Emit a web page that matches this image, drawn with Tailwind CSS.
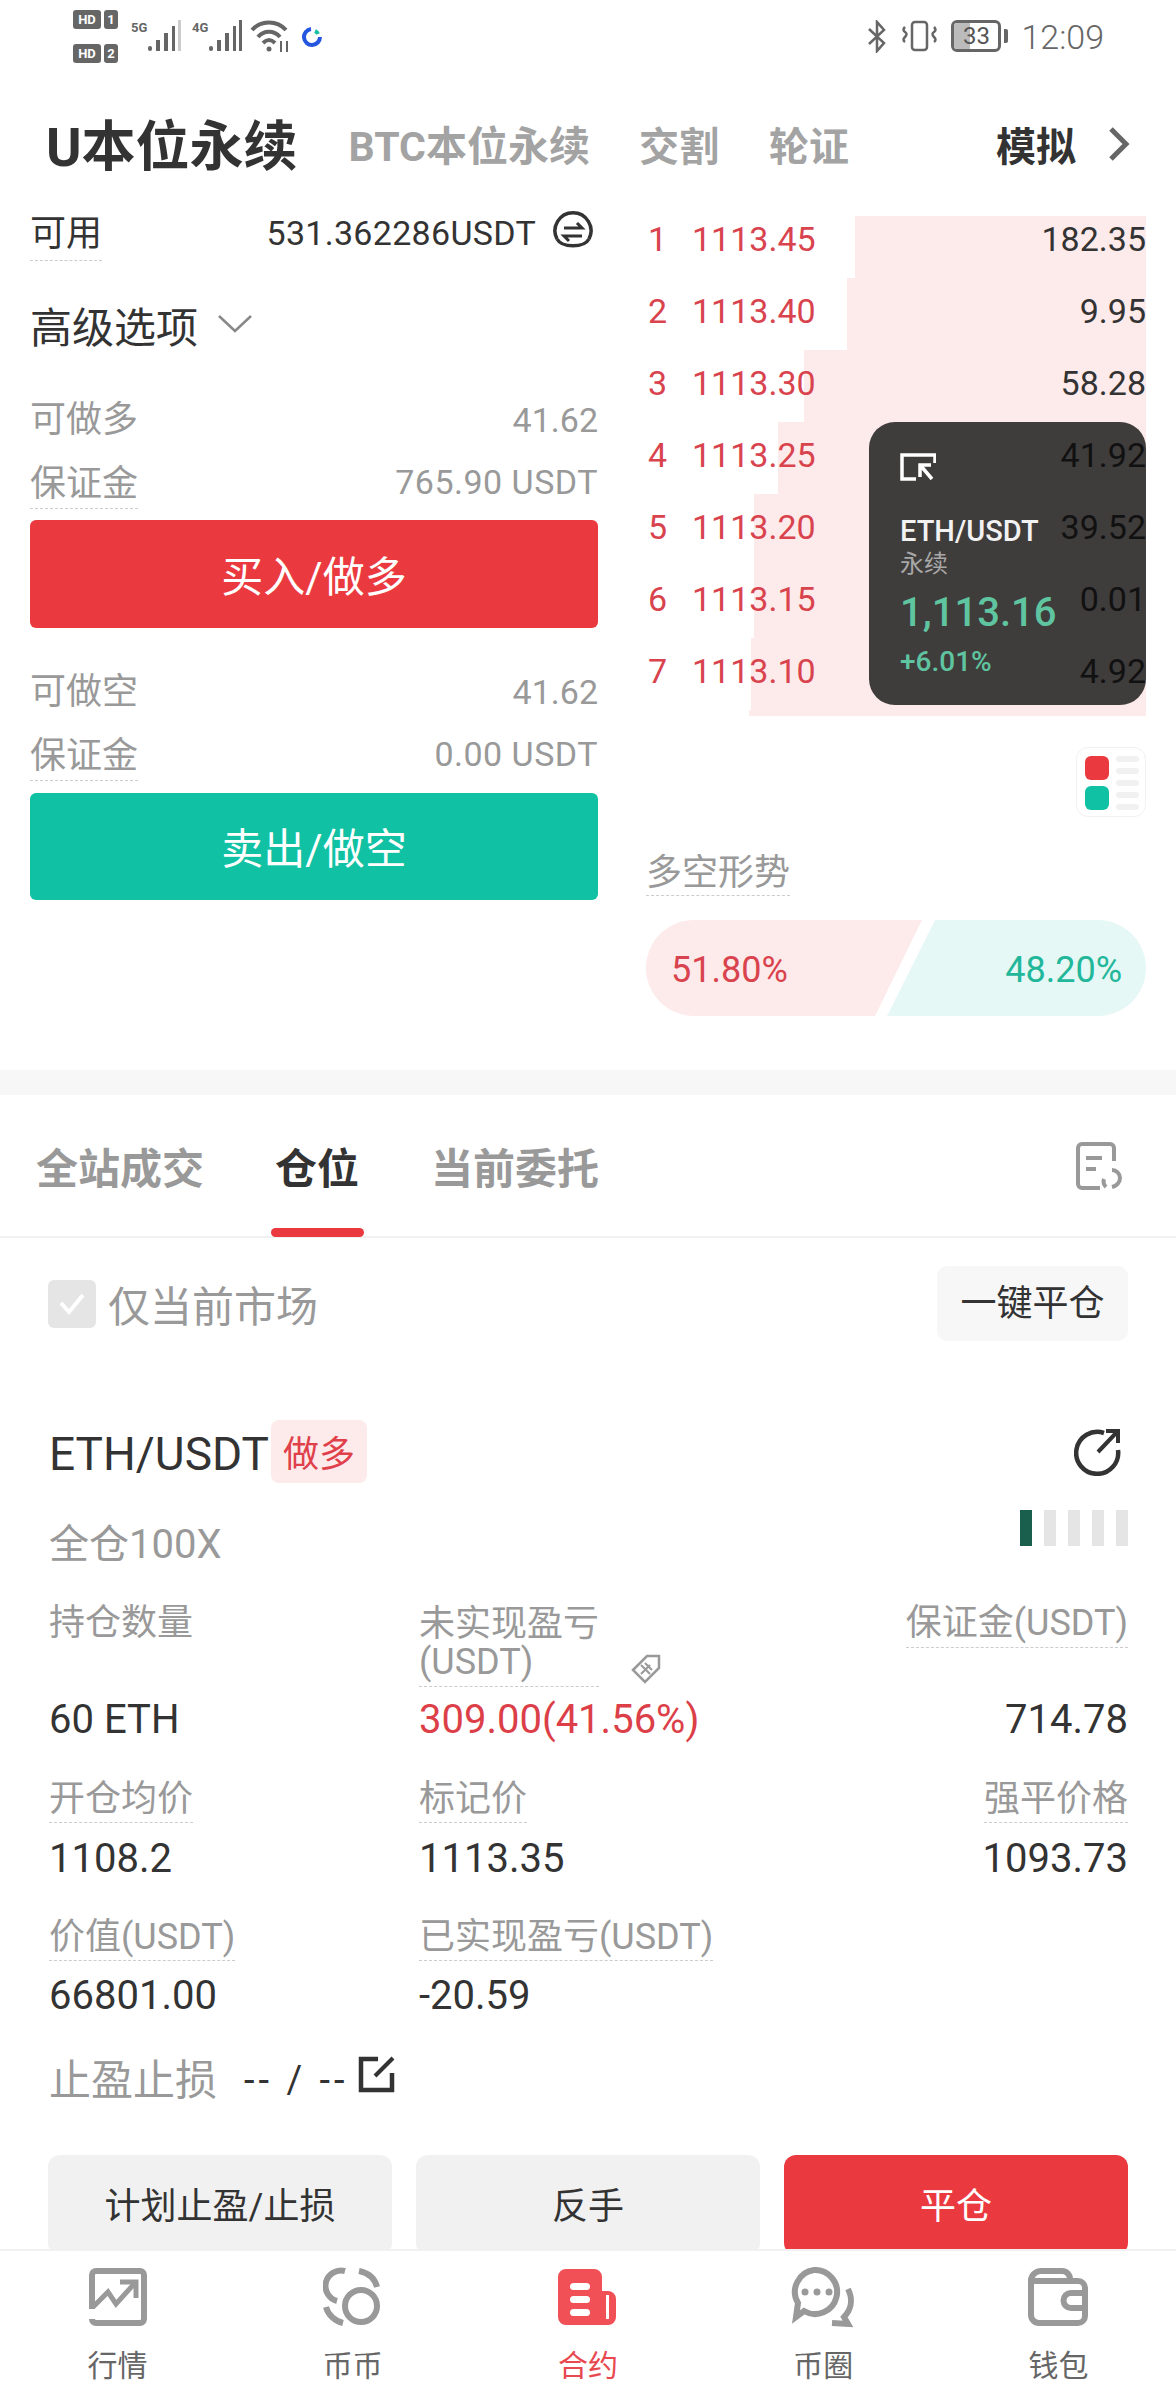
<!DOCTYPE html>
<html lang="zh">
<head>
<meta charset="utf-8">
<script src="https://cdn.jsdelivr.net/npm/@tailwindcss/browser@4"></script>
</head>
<body class="bg-white">
<div class="w-[1176px] h-[2400px] overflow-hidden bg-white text-[#333] font-['Roboto','Noto_Sans_CJK_SC',sans-serif]">
  <div class="h-[2249px] overflow-hidden">

    <!-- status bar -->
    <div class="h-[74px] mb-[18px] flex justify-between pl-[73px] pr-[72px]">
      <div class="flex">
        <div class="w-[46px] pt-[10px] flex flex-col gap-[15px]">
          <div class="flex gap-[3px] h-[19px]"><span class="w-[28px] bg-[#666] rounded-[3px] text-white text-[13px] leading-[19px] font-bold text-center">HD</span><span class="w-[14px] bg-[#666] rounded-[3px] text-white text-[13px] leading-[19px] font-bold text-center">1</span></div>
          <div class="flex gap-[3px] h-[19px]"><span class="w-[28px] bg-[#666] rounded-[3px] text-white text-[13px] leading-[19px] font-bold text-center">HD</span><span class="w-[14px] bg-[#666] rounded-[3px] text-white text-[13px] leading-[19px] font-bold text-center">2</span></div>
        </div>
        <div class="ml-[12px] mt-[20px] w-[17px] text-[13px] leading-[15px] font-bold text-[#666]">5G</div>
        <svg class="mt-[20px]" width="33" height="32" viewBox="0 0 33 32" fill="#666"><rect x="0" y="26" width="4" height="5" rx="2"/><rect x="8" y="20" width="4" height="11"/><rect x="16" y="13" width="4" height="18"/><rect x="24" y="6" width="3" height="25"/><rect x="30" y="0" width="3" height="31" fill="#ccc"/></svg>
        <div class="ml-[11px] mt-[20px] w-[17px] text-[13px] leading-[15px] font-bold text-[#666]">4G</div>
        <svg class="mt-[20px]" width="33" height="32" viewBox="0 0 33 32" fill="#666"><rect x="0" y="26" width="4" height="5" rx="2"/><rect x="8" y="20" width="4" height="11"/><rect x="16" y="13" width="4" height="18"/><rect x="24" y="6" width="3" height="25"/><rect x="30" y="0" width="3" height="31"/></svg>
        <svg class="ml-[8px] mt-[19px]" width="40" height="34" viewBox="0 0 40 34" fill="none" stroke="#666" stroke-width="4"><path d="M2 11C11 1 27 1 36 11"/><path d="M8 18C14 11 24 11 30 18"/><path d="M13 24C17 20 21 20 25 24"/><circle cx="19" cy="30" r="2.5" fill="#666" stroke="none"/><path d="M31 22v11M37 22v11" stroke-width="2"/></svg>
        <svg class="ml-[12px] mt-[27px]" width="20" height="20" viewBox="0 0 20 20" fill="none" stroke-width="4"><path d="M9 2A8 8 0 1 0 18 10" stroke="#2456e0"/><path d="M13 4a6 6 0 0 1 3 3" stroke="#14c2a3"/></svg>
      </div>
      <div class="flex items-start">
        <svg class="mt-[20px]" width="20" height="33" viewBox="0 0 20 33" fill="none" stroke="#666" stroke-width="2.5"><path d="M2 9L17 23L10 31V2L17 10L2 24"/></svg>
        <svg class="ml-[14px] mt-[20px]" width="37" height="32" viewBox="0 0 37 32" fill="none" stroke="#666" stroke-width="2.5"><rect x="11" y="2" width="15" height="28" rx="3"/><path d="M4 7q-3 3 0 5t0 5t0 5M33 7q3 3 0 5t0 5t0 5"/></svg>
        <div class="ml-[13px] mt-[20px] w-[50px] h-[32px] border-[3px] border-[#666] rounded-[6px] relative overflow-hidden text-center text-[24px] leading-[26px] text-[#555]"><div class="absolute left-0 top-0 bottom-0 w-[16px] bg-[#bbb]"></div><span class="relative">33</span></div>
        <div class="ml-[3px] mt-[29px] w-[4px] h-[14px] bg-[#666] rounded-r-[2px]"></div>
        <div class="ml-[13px] text-[34px] leading-[74px] font-light text-[#666]">12:09</div>
      </div>
    </div>

    <!-- contract type tabs -->
    <div class="h-[110px] flex items-center pl-[46px] pr-[46px] font-bold">
      <span class="text-[54px] text-[#333]">U本位永续</span>
      <span class="ml-[51px] mt-[2px] text-[41px] text-[#a3a3a3]">BTC本位永续</span>
      <span class="ml-[49px] mt-[2px] text-[40px] text-[#a3a3a3]">交割</span>
      <span class="ml-[50px] mt-[2px] text-[40px] text-[#a3a3a3]">轮证</span>
      <span class="ml-auto mt-[2px] text-[40px] text-[#333]">模拟</span>
      <svg class="ml-[32px] mb-[6px]" width="22" height="34" viewBox="0 0 22 34" fill="none" stroke="#666" stroke-width="5"><path d="M3 2L18 17L3 32"/></svg>
    </div>

    <!-- trade panel + order book -->
    <div class="h-[868px] flex pl-[30px]">
      <div class="w-[568px]">
        <div class="mt-[12px] flex justify-between items-start">
          <span class="text-[36px] leading-[40px] pb-[6px] border-b border-dashed border-[#ccc]">可用</span>
          <span class="flex items-center mt-[-3px] mr-[4px] text-[34px] leading-[40px] tracking-[0.3px]">531.362286USDT
            <svg class="ml-[16px] mb-[2px]" width="42" height="42" viewBox="0 0 42 42" fill="none" stroke="#333" stroke-width="3.5"><path d="M5 28A18 18 0 1 1 37 28"/><path d="M5 28C10 37 32 37 37 28" /><path d="M12 17H30L25 12M30 25H12L17 30" stroke-width="3"/></svg>
          </span>
        </div>
        <div class="mt-[44px] flex items-center text-[42px] leading-[48px]">高级选项
          <svg class="ml-[20px] mb-[10px]" width="34" height="20" viewBox="0 0 34 20" fill="none" stroke="#888" stroke-width="2.5"><path d="M1 2L17 17L33 2"/></svg>
        </div>
        <div class="mt-[47px] flex justify-between text-[36px] leading-[40px] text-[#999]"><span>可做多</span><span class="text-[34px]">41.62</span></div>
        <div class="mt-[24px] flex justify-between items-start text-[36px] leading-[40px] text-[#999]"><span class="pb-[4px] border-b border-dashed border-[#ccc]">保证金</span><span class="text-[34px] tracking-[0.5px] mt-[-2px]">765.90 USDT</span></div>
        <div class="mt-[11px] h-[108px] pt-[6px] rounded-[6px] bg-[#ea3a40] flex items-center justify-center text-white text-[42px]">买入/做多</div>
        <div class="mt-[44px] flex justify-between text-[36px] leading-[40px] text-[#999]"><span>可做空</span><span class="text-[34px]">41.62</span></div>
        <div class="mt-[24px] flex justify-between items-start text-[36px] leading-[40px] text-[#999]"><span class="pb-[4px] border-b border-dashed border-[#ccc]">保证金</span><span class="text-[34px] tracking-[0.5px] mt-[-2px]">0.00 USDT</span></div>
        <div class="mt-[12px] h-[107px] pt-[6px] rounded-[6px] bg-[#10c2a3] flex items-center justify-center text-white text-[42px]">卖出/做空</div>
      </div>

      <div class="ml-[48px] w-[500px] mt-[1px]">
        <div class="relative">
          <!-- depth rows -->
          <div class="relative h-[72px] flex items-center text-[34px] text-[#d9434e]">
            <div class="absolute right-0 top-[13px] h-[62px] w-[291px] bg-[#fdeaea]"></div>
            <span class="relative z-10 w-[46px] pl-[2px]">1</span><span class="relative z-10">1113.45</span><span class="relative z-10 ml-auto text-[#333]">182.35</span>
          </div>
          <div class="relative h-[72px] flex items-center text-[34px] text-[#d9434e]">
            <div class="absolute right-0 top-[3px] h-[72px] w-[299px] bg-[#fdeaea]"></div>
            <span class="relative z-10 w-[46px] pl-[2px]">2</span><span class="relative z-10">1113.40</span><span class="relative z-10 ml-auto text-[#333]">9.95</span>
          </div>
          <div class="relative h-[72px] flex items-center text-[34px] text-[#d9434e]">
            <div class="absolute right-0 top-[3px] h-[72px] w-[342px] bg-[#fdeaea]"></div>
            <span class="relative z-10 w-[46px] pl-[2px]">3</span><span class="relative z-10">1113.30</span><span class="relative z-10 ml-auto text-[#333]">58.28</span>
          </div>
          <div class="relative h-[72px] flex items-center text-[34px] text-[#d9434e]">
            <div class="absolute right-0 top-[3px] h-[72px] w-[368px] bg-[#fdeaea]"></div>
            <span class="relative z-10 w-[46px] pl-[2px]">4</span><span class="relative z-10">1113.25</span><span class="relative z-10 ml-auto text-[#111]">41.92</span>
          </div>
          <div class="relative h-[72px] flex items-center text-[34px] text-[#d9434e]">
            <div class="absolute right-0 top-[3px] h-[72px] w-[392px] bg-[#fdeaea]"></div>
            <span class="relative z-10 w-[46px] pl-[2px]">5</span><span class="relative z-10">1113.20</span><span class="relative z-10 ml-auto text-[#111]">39.52</span>
          </div>
          <div class="relative h-[72px] flex items-center text-[34px] text-[#d9434e]">
            <div class="absolute right-0 top-[3px] h-[72px] w-[392px] bg-[#fdeaea]"></div>
            <span class="relative z-10 w-[46px] pl-[2px]">6</span><span class="relative z-10">1113.15</span><span class="relative z-10 ml-auto text-[#111]">0.01</span>
          </div>
          <div class="relative h-[72px] flex items-center text-[34px] text-[#d9434e]">
            <div class="absolute right-0 top-[3px] h-[72px] w-[395px] bg-[#fdeaea]"></div>
            <div class="absolute right-0 top-[75px] h-[6px] w-[397px] bg-[#fdeaea]"></div>
            <span class="relative z-10 w-[46px] pl-[2px]">7</span><span class="relative z-10">1113.10</span><span class="relative z-10 ml-auto text-[#111]">4.92</span>
          </div>
          <!-- floating price window -->
          <div class="absolute z-[5] left-[223px] top-[219px] w-[277px] h-[283px] rounded-[26px] bg-[#3f3c3c] pl-[31px] pt-[31px]">
            <svg width="36" height="28" viewBox="0 0 36 28" fill="none" stroke="#fff" stroke-width="3.5"><path d="M16 26H2V2H35V10"/><path d="M32 26L21 13M20 24V12H31" /></svg>
            <div class="mt-[33px] text-[29px] leading-[34px] font-medium text-[#f2f2f2]">ETH/USDT</div>
            <div class="mt-[1px] text-[24px] leading-[30px] text-[#a8a8a8]">永续</div>
            <div class="mt-[10px] text-[40px] leading-[48px] font-medium text-[#5fc4a0]">1,113.16</div>
            <div class="mt-[8px] text-[28px] leading-[34px] font-medium text-[#5fc4a0]">+6.01%</div>
          </div>
        </div>

        <div class="mt-[40px] flex justify-end">
          <div class="w-[70px] h-[70px] rounded-[12px] border border-[#f1f1f1] flex gap-[7px] pl-[8px] pt-[8px]">
            <div class="flex flex-col gap-[6px]"><div class="w-[24px] h-[24px] rounded-[6px] bg-[#ea3a40]"></div><div class="w-[24px] h-[24px] rounded-[6px] bg-[#10c2a3]"></div></div>
            <div class="flex flex-col gap-[6px]"><div class="w-[23px] h-[6px] rounded-full bg-[#f1f1f1]"></div><div class="w-[23px] h-[6px] rounded-full bg-[#f1f1f1]"></div><div class="w-[23px] h-[6px] rounded-full bg-[#f1f1f1]"></div><div class="w-[23px] h-[6px] rounded-full bg-[#f1f1f1]"></div><div class="w-[23px] h-[6px] rounded-full bg-[#f1f1f1]"></div></div>
          </div>
        </div>
        <div class="mt-[36px]"><span class="inline-block text-[36px] leading-[40px] text-[#999] pb-[2px] border-b border-dashed border-[#ccc]">多空形势</span></div>
        <div class="mt-[24px] h-[96px] flex text-[36px]">
          <div class="w-[276px] h-full pt-[3px] rounded-l-[48px] bg-[#fdeaea] text-[#d9434e] flex items-center pl-[25px] [clip-path:polygon(0_0,100%_0,229px_100%,0_100%)]">51.80%</div>
          <div class="ml-[-35px] w-[259px] h-full pt-[3px] rounded-r-[48px] bg-[#e6f8f5] text-[#22b79a] flex items-center justify-end pr-[24px] [clip-path:polygon(48px_0,100%_0,100%_100%,0_100%)]">48.20%</div>
        </div>
      </div>
    </div>

    <div class="h-[25px] bg-[#f7f7f7]"></div>

    <!-- position tabs -->
    <div class="h-[143px] pt-[7px] pl-[36px] pr-[54px] flex border-b-2 border-[#f1f1f1] text-[42px] font-bold text-[#999]">
      <div class="flex items-center">全站成交</div>
      <div class="relative ml-[71px] flex items-center text-[#333]">仓位<div class="absolute left-[-4px] right-[-5px] bottom-[-1px] h-[9px] rounded-full bg-[#ea3a40]"></div></div>
      <div class="ml-[72px] flex items-center">当前委托</div>
      <svg class="ml-auto mb-[7px] self-center" width="46" height="50" viewBox="0 0 46 50" fill="none" stroke="#999" stroke-width="4"><path d="M38 20V7a4 4 0 0 0-4-4H6a4 4 0 0 0-4 4v36a4 4 0 0 0 4 4h18"/><path d="M10 17h16M10 28h10"/><path d="M36 29a8 8 0 0 1 8 8c0 5-4 8-8 9M30 46c-2-2-3-5-2-8"/></svg>
    </div>

    <div class="mt-[28px] h-[75px] flex items-center justify-between px-[48px]">
      <div class="flex items-center">
        <div class="w-[48px] h-[48px] rounded-[6px] bg-[#e5e5e5] flex items-center justify-center">
          <svg width="28" height="24" viewBox="0 0 28 24" fill="none" stroke="#fff" stroke-width="4"><path d="M3 11L11 20L25 3"/></svg>
        </div>
        <span class="ml-[12px] mt-[8px] text-[42px] text-[#999]">仅当前市场</span>
      </div>
      <div class="w-[191px] h-[75px] rounded-[10px] bg-[#f7f7f7] flex items-center justify-center text-[36px] text-[#333]">一键平仓</div>
    </div>

    <!-- position card -->
    <div class="mt-[79px] h-[63px] flex items-center pl-[49px] pr-[54px]">
      <span class="w-[222px] mt-[5px] text-[46px] whitespace-nowrap">ETH/USDT</span>
      <span class="w-[96px] h-[63px] pt-[6px] rounded-[8px] bg-[#fdeaea] flex items-center justify-center text-[36px] text-[#e0404a]">做多</span>
      <svg class="ml-auto" width="48" height="48" viewBox="0 0 48 48" fill="none" stroke="#333" stroke-width="4.5"><path d="M30 5A21 21 0 1 0 44 22"/><path d="M24 24L43 4M32 3H44V15" stroke-width="4"/></svg>
    </div>
    <div class="mt-[27px] flex justify-between items-start pl-[49px] pr-[48px]">
      <span class="mt-[13px] text-[40px] leading-[44px] text-[#999]">全仓100X</span>
      <div class="flex gap-[12px]"><div class="w-[12px] h-[36px] bg-[#1a5e4e]"></div><div class="w-[12px] h-[36px] bg-[#e5e5e5]"></div><div class="w-[12px] h-[36px] bg-[#e5e5e5]"></div><div class="w-[12px] h-[36px] bg-[#e5e5e5]"></div><div class="w-[12px] h-[36px] bg-[#e5e5e5]"></div></div>
    </div>

    <div class="pl-[49px] pr-[48px]">
      <div class="mt-[37px] grid grid-cols-[370px_1fr_auto] text-[36px] leading-[38px] text-[#999]">
        <div>持仓数量</div>
        <div class="flex items-end h-[83px]">
          <span class="pb-[5px] border-b border-dashed border-[#ccc] w-[180px] whitespace-nowrap">未实现盈亏<br>(USDT)</span>
          <svg class="ml-[31px] mb-[2px]" width="32" height="32" viewBox="0 0 32 32" fill="none" stroke="#999" stroke-width="2.5"><path d="M3 17L17 3L29 3L29 15L15 29Z"/><path d="M11 12l9 9M20 12l-9 9M15 10l7 7" stroke-width="2"/></svg>
        </div>
        <div><span class="inline-block pb-[5px] border-b border-dashed border-[#ccc]">保证金(USDT)</span></div>
      </div>
      <div class="mt-[11px] grid grid-cols-[370px_1fr_auto] text-[40px] leading-[44px]">
        <div>60 ETH</div><div class="text-[#dc3f48]">309.00(41.56%)</div><div>714.78</div>
      </div>
      <div class="mt-[38px] grid grid-cols-[370px_1fr_auto] text-[36px] leading-[38px] text-[#999]">
        <div><span class="inline-block pb-[4px] border-b border-dashed border-[#ccc]">开仓均价</span></div>
        <div><span class="inline-block pb-[4px] border-b border-dashed border-[#ccc]">标记价</span></div>
        <div><span class="inline-block pb-[4px] border-b border-dashed border-[#ccc]">强平价格</span></div>
      </div>
      <div class="mt-[14px] grid grid-cols-[370px_1fr_auto] text-[40px] leading-[44px]">
        <div>1108.2</div><div>1113.35</div><div>1093.73</div>
      </div>
      <div class="mt-[37px] grid grid-cols-[370px_1fr_auto] text-[36px] leading-[38px] text-[#999]">
        <div><span class="inline-block pb-[4px] border-b border-dashed border-[#ccc]">价值(USDT)</span></div>
        <div><span class="inline-block pb-[4px] border-b border-dashed border-[#ccc]">已实现盈亏(USDT)</span></div>
      </div>
      <div class="mt-[13px] grid grid-cols-[370px_1fr_auto] text-[40px] leading-[44px]">
        <div>66801.00</div><div>-20.59</div>
      </div>
      <div class="mt-[39px] h-[44px] flex items-center">
        <span class="mt-[2px] text-[42px] text-[#999]">止盈止损</span>
        <span class="ml-[27px] mt-[2px] text-[38px] tracking-[4px] text-[#333]">-- / --</span>
        <svg class="ml-[9px] mb-[10px]" width="38" height="38" viewBox="0 0 38 38" fill="none" stroke="#333" stroke-width="4.5"><path d="M20 4H3V35H34V18"/><path d="M17 21L35 3" stroke-width="4"/></svg>
      </div>
    </div>

    <div class="mt-[54px] pl-[48px] pr-[48px] grid grid-cols-3 gap-[24px] text-[36px]">
      <div class="h-[100px] pt-[4px] rounded-[12px] bg-[#f1f1f1] flex items-center justify-center">计划止盈/止损</div>
      <div class="h-[100px] pt-[4px] rounded-[12px] bg-[#f1f1f1] flex items-center justify-center">反手</div>
      <div class="h-[100px] pt-[4px] rounded-[12px] bg-[#ea3a40] text-white flex items-center justify-center">平仓</div>
    </div>
  </div>

  <!-- bottom nav -->
  <div class="h-[151px] border-t-2 border-[#f1f1f1] grid grid-cols-5 text-[30px] text-[#666]">
    <div class="flex flex-col items-center pt-[16px]">
      <svg width="60" height="60" viewBox="0 0 60 60" fill="none" stroke="#999" stroke-width="6"><path d="M4 42V8a4 4 0 0 1 4-4h44a4 4 0 0 1 4 4v44a4 4 0 0 1-4 4H8a4 4 0 0 1-4-4"/><path d="M5 40L20 25L28 37L46 17" stroke-width="5"/><path d="M32 15H48V31" stroke-width="5"/></svg>
      <span class="mt-[19px] leading-[40px]">行情</span>
    </div>
    <div class="flex flex-col items-center pt-[16px]">
      <svg width="60" height="60" viewBox="0 0 60 60" fill="none" stroke="#999" stroke-width="6"><circle cx="38" cy="39" r="16"/><path d="M14 34A15 15 0 0 1 22 4"/><path d="M36 4C46 6 52 12 54 20"/><path d="M3 40C5 48 12 54 20 56"/></svg>
      <span class="mt-[19px] leading-[40px]">币币</span>
    </div>
    <div class="flex flex-col items-center pt-[16px] text-[#e8484f]">
      <svg width="60" height="60" viewBox="0 0 60 60"><path d="M8 2H36a8 8 0 0 1 8 8V24H50a8 8 0 0 1 8 8V50a8 8 0 0 1-8 8H8a8 8 0 0 1-8-8V10a8 8 0 0 1 8-8Z" fill="#f05056"/><rect x="12" y="16" width="20" height="7" rx="3.5" fill="#fff"/><rect x="12" y="29" width="20" height="7" rx="3.5" fill="#fff"/><rect x="12" y="42" width="20" height="7" rx="3.5" fill="#fff"/><rect x="48" y="28" width="3" height="24" fill="#fff"/></svg>
      <span class="mt-[19px] leading-[40px]">合约</span>
    </div>
    <div class="flex flex-col items-center pt-[16px]">
      <svg width="66" height="62" viewBox="0 0 66 62" fill="none" stroke="#999" stroke-width="6"><path d="M24 3A22 22 0 1 1 14 44L6 50L8 36A22 22 0 0 1 24 3Z"/><circle cx="15" cy="25" r="3.5" fill="#999" stroke="none"/><circle cx="27" cy="25" r="3.5" fill="#999" stroke="none"/><circle cx="39" cy="25" r="3.5" fill="#999" stroke="none"/><path d="M58 22C64 34 60 44 54 50L58 57L42 56"/></svg>
      <span class="mt-[17px] leading-[40px]">币圈</span>
    </div>
    <div class="flex flex-col items-center pt-[16px]">
      <svg width="60" height="60" viewBox="0 0 60 60" fill="none" stroke="#999" stroke-width="6"><path d="M3 14V48a8 8 0 0 0 8 8H50a7 7 0 0 0 7-7V21a7 7 0 0 0-7-7H3Zm0 0a10 10 0 0 1 10-10H34a8 8 0 0 1 8 8v2"/><path d="M57 26H43a7 7 0 0 0 0 15H57"/></svg>
      <span class="mt-[19px] leading-[40px]">钱包</span>
    </div>
  </div>
</div>
</body>
</html>
